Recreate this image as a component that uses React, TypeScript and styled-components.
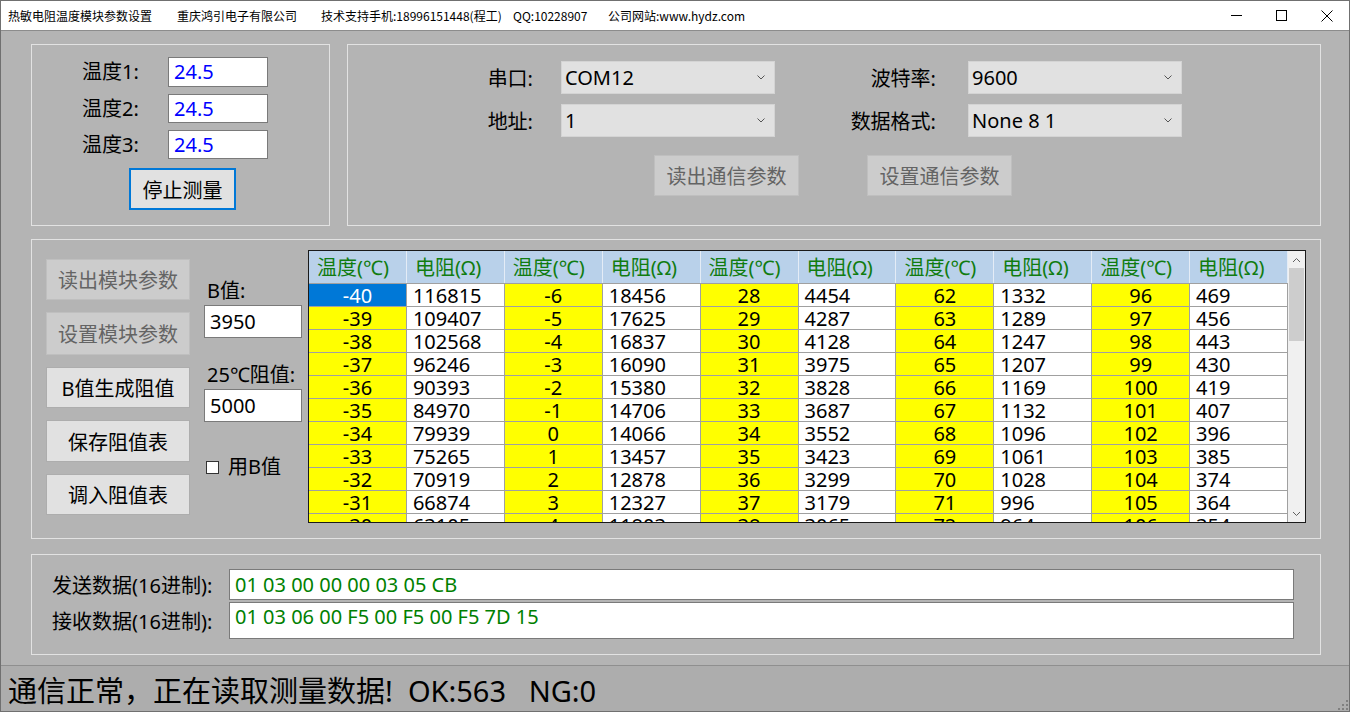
import React from "react";
import styled, { createGlobalStyle } from "styled-components";

const FONT = `"Noto Sans", "Noto Sans CJK SC", sans-serif`;

const GlobalStyle = createGlobalStyle`
  html, body { margin: 0; padding: 0; }
  body { background: #b4b4b4; font-family: ${FONT}; }
  * { box-sizing: border-box; }
`;

const Window = styled.div`
  width: 1350px;
  height: 712px;
  display: flex;
  flex-direction: column;
  background: #b4b4b4;
  border: 1px solid #707070;
  overflow: hidden;
  color: #000;
`;

const TitleBar = styled.div`
  height: 30px;
  flex: none;
  background: #fff;
  border-bottom: 1px solid #8c8c8c;
  display: flex;
  align-items: center;
  padding-left: 7px;
  font-family: "Noto Sans CJK SC", sans-serif;
  font-size: 12px;
`;

const TitleItem = styled.span<{ $w?: number }>`
  width: ${(p) => (p.$w ? `${p.$w}px` : "auto")};
  flex: none;
  white-space: nowrap;
`;

const TitleButtons = styled.div`
  margin-left: auto;
  display: flex;
  height: 100%;
`;

const TitleButton = styled.div`
  width: 45px;
  height: 100%;
  display: flex;
  align-items: center;
  justify-content: center;
`;

const Content = styled.div`
  flex: 1;
  display: flex;
  flex-direction: column;
  padding: 13px 28px 0 30px;
`;

const Group = styled.div<{ $w?: number; $h: number; $mt?: number }>`
  border: 1px solid #e2e2e2;
  width: ${(p) => (p.$w ? `${p.$w}px` : "100%")};
  height: ${(p) => p.$h}px;
  margin-top: ${(p) => p.$mt || 0}px;
  flex: none;
`;

const TopRow = styled.div`
  display: flex;
  gap: 17px;
`;

/* ---------- group 1 ---------- */
const Temps = styled.div`
  display: flex;
  flex-direction: column;
  gap: 7px;
  padding: 12px 0 0 50px;
`;

const FieldRow = styled.div`
  display: flex;
  align-items: center;
`;

const Label = styled.span<{ $w?: number }>`
  font-size: 20px;
  line-height: 28px;
  white-space: nowrap;
  width: ${(p) => (p.$w ? `${p.$w}px` : "auto")};
  flex: none;
`;

const TextBox = styled.div<{ $w: number; $h: number; $color?: string; $lh?: number }>`
  width: ${(p) => p.$w}px;
  height: ${(p) => p.$h}px;
  background: #fff;
  border: 1px solid #7a7a7a;
  color: ${(p) => p.$color || "#000"};
  font-size: 20px;
  line-height: ${(p) => p.$lh ?? p.$h - 2}px;
  padding-left: 5px;
  white-space: nowrap;
  flex: none;
`;

const Button = styled.div<{ $w: number; $h: number; $disabled?: boolean; $focused?: boolean }>`
  width: ${(p) => p.$w}px;
  height: ${(p) => p.$h}px;
  display: flex;
  align-items: center;
  justify-content: center;
  font-size: 20px;
  white-space: nowrap;
  flex: none;
  background: ${(p) => (p.$disabled ? "#cccccc" : "#e1e1e1")};
  color: ${(p) => (p.$disabled ? "#646464" : "#000")};
  border: ${(p) =>
    p.$focused ? "2px solid #0078d7" : p.$disabled ? "1px solid #bfbfbf" : "1px solid #adadad"};
`;

const StopButton = styled(Button)`
  margin: 9px 0 0 97px;
`;

/* ---------- group 2 ---------- */
const CommGrid = styled.div`
  display: grid;
  grid-template-columns: 213px 214px 193px 214px;
  row-gap: 10px;
  padding-top: 16px;
  align-items: center;
`;

const CommLabel = styled.span<{ $pr: number }>`
  font-size: 20px;
  text-align: right;
  padding-right: ${(p) => p.$pr}px;
  white-space: nowrap;
`;

const Combo = styled.div`
  height: 33px;
  background: #e1e1e1;
  border: 1px solid #d4d4d4;
  display: flex;
  align-items: center;
  padding: 0 9px 0 3px;
  font-size: 20px;
  justify-content: space-between;
`;

const CommButtons = styled.div`
  display: flex;
  gap: 68px;
  padding: 18px 0 0 306px;
`;

/* ---------- group 3 ---------- */
const TableGroupInner = styled.div`
  display: flex;
  padding: 10px 14px 0 14px;
  height: 100%;
`;

const ButtonColumn = styled.div`
  display: flex;
  flex-direction: column;
  gap: 12px;
  margin-top: 9px;
  width: 144px;
  flex: none;
`;

const MidColumn = styled.div`
  width: 98px;
  margin: 27px 6px 0 14px;
  display: flex;
  flex-direction: column;
  flex: none;
`;

const MidLabel = styled.div<{ $top: number }>`
  font-size: 20px;
  line-height: 28px;
  padding: ${(p) => p.$top}px 0 0 3px;
  white-space: nowrap;
`;

const CheckRow = styled.div`
  display: flex;
  align-items: center;
  gap: 9px;
  margin-top: 33px;
  padding-left: 2px;
  font-size: 20px;
  line-height: 24px;
`;

const CheckBox = styled.div`
  width: 13px;
  height: 13px;
  background: #fff;
  border: 1px solid #333;
  flex: none;
`;

const Table = styled.div`
  width: 998px;
  height: 273px;
  border: 1px solid #1a1a1a;
  display: flex;
  flex: none;
  background: #fff;
  overflow: hidden;
`;

const TableBody = styled.div`
  width: 979px;
  display: flex;
  flex-direction: column;
  overflow: hidden;
`;

const HeaderRow = styled.div`
  display: grid;
  grid-template-columns: repeat(10, 1fr);
  height: 33px;
  flex: none;
  background: #b9d1ea;
  border-bottom: 1px solid #a0a0a0;
`;

const HeaderCell = styled.div`
  color: #107c10;
  font-size: 20px;
  line-height: 34px;
  padding-left: 8px;
  border-right: 1px solid #e4ecf6;
  white-space: nowrap;
  overflow: hidden;
`;

const DataRow = styled.div`
  display: grid;
  grid-template-columns: repeat(10, 1fr);
  height: 23px;
  flex: none;
  border-bottom: 1px solid #a0a0a0;
`;

const Cell = styled.div<{ $temp?: boolean; $sel?: boolean }>`
  font-size: 20px;
  line-height: 23px;
  white-space: nowrap;
  overflow: hidden;
  border-right: 1px solid #a0a0a0;
  text-align: ${(p) => (p.$temp ? "center" : "left")};
  padding-left: ${(p) => (p.$temp ? 0 : 6)}px;
  background: ${(p) => (p.$sel ? "#0078d7" : p.$temp ? "#ffff00" : "#fff")};
  color: ${(p) => (p.$sel ? "#fff" : "#000")};
`;

const ScrollBar = styled.div`
  width: 17px;
  flex: none;
  background: #f0f0f0;
  display: flex;
  flex-direction: column;
  align-items: center;
`;

const ScrollArrow = styled.div`
  height: 17px;
  width: 17px;
  display: flex;
  align-items: center;
  justify-content: center;
  flex: none;
`;

const ScrollTrack = styled.div`
  flex: 1;
  width: 100%;
  display: flex;
  justify-content: center;
`;

const Thumb = styled.div`
  width: 15px;
  height: 73px;
  background: #cdcdcd;
`;

/* ---------- group 4 ---------- */
const DataGroupInner = styled.div`
  display: flex;
  flex-direction: column;
  gap: 2px;
  padding: 14px 0 0 20px;
`;

const DataLabel = styled.span`
  width: 177px;
  font-size: 20px;
  white-space: nowrap;
  flex: none;
`;

/* ---------- status bar ---------- */
const StatusBar = styled.div`
  margin-top: auto;
  height: 46px;
  flex: none;
  border-top: 1px solid #8f8f8f;
  background: #adadad;
  display: flex;
  align-items: center;
  padding-left: 7px;
  font-size: 29px;
  position: relative;
  white-space: pre;
`;

const Grip = styled.svg`
  position: absolute;
  right: 1px;
  bottom: 1px;
`;

const Chevron = ({ up }: { up?: boolean }) => (
  <svg width="9" height="6" viewBox="0 0 9 6">
    <polyline
      points={up ? "1,5 4.5,1.5 8,5" : "1,1 4.5,4.5 8,1"}
      fill="none"
      stroke="#606060"
      strokeWidth="1"
    />
  </svg>
);

const ComboChevron = () => (
  <svg width="8" height="5" viewBox="0 0 8 5">
    <polyline points="0.5,0.5 4,4 7.5,0.5" fill="none" stroke="#555" strokeWidth="1" />
  </svg>
);

const rows: number[][] = [
  [-40, 116815, -6, 18456, 28, 4454, 62, 1332, 96, 469],
  [-39, 109407, -5, 17625, 29, 4287, 63, 1289, 97, 456],
  [-38, 102568, -4, 16837, 30, 4128, 64, 1247, 98, 443],
  [-37, 96246, -3, 16090, 31, 3975, 65, 1207, 99, 430],
  [-36, 90393, -2, 15380, 32, 3828, 66, 1169, 100, 419],
  [-35, 84970, -1, 14706, 33, 3687, 67, 1132, 101, 407],
  [-34, 79939, 0, 14066, 34, 3552, 68, 1096, 102, 396],
  [-33, 75265, 1, 13457, 35, 3423, 69, 1061, 103, 385],
  [-32, 70919, 2, 12878, 36, 3299, 70, 1028, 104, 374],
  [-31, 66874, 3, 12327, 37, 3179, 71, 996, 105, 364],
  [-30, 63105, 4, 11803, 38, 3065, 72, 964, 106, 354],
];

const fmt = (n: number) => (n < 0 ? `-${-n}` : `${n}`);

const leftButtons: { label: string; h: number; disabled?: boolean }[] = [
  { label: "读出模块参数", h: 41, disabled: true },
  { label: "设置模块参数", h: 43, disabled: true },
  { label: "B值生成阻值", h: 41 },
  { label: "保存阻值表", h: 42 },
  { label: "调入阻值表", h: 41 },
];

export default function App() {
  return (
    <>
      <GlobalStyle />
      <Window>
        <TitleBar>
          <TitleItem $w={169}>热敏电阻温度模块参数设置</TitleItem>
          <TitleItem $w={144}>重庆鸿引电子有限公司</TitleItem>
          <TitleItem $w={192}>技术支持手机:18996151448(程工)</TitleItem>
          <TitleItem $w={95}>QQ:10228907</TitleItem>
          <TitleItem>公司网站:www.hydz.com</TitleItem>
          <TitleButtons>
            <TitleButton>
              <svg width="11" height="11" viewBox="0 0 11 11">
                <line x1="0" y1="5.5" x2="11" y2="5.5" stroke="#000" strokeWidth="1" />
              </svg>
            </TitleButton>
            <TitleButton>
              <svg width="11" height="11" viewBox="0 0 11 11">
                <rect x="0.5" y="0.5" width="10" height="10" fill="none" stroke="#000" strokeWidth="1" />
              </svg>
            </TitleButton>
            <TitleButton>
              <svg width="12" height="12" viewBox="0 0 12 12">
                <path d="M0.5 0.5 L11.5 11.5 M11.5 0.5 L0.5 11.5" stroke="#000" strokeWidth="1" />
              </svg>
            </TitleButton>
          </TitleButtons>
        </TitleBar>

        <Content>
          <TopRow>
            <Group $w={299} $h={182}>
              <Temps>
                {[1, 2, 3].map((i) => (
                  <FieldRow key={i}>
                    <Label $w={86}>温度{i}:</Label>
                    <TextBox $w={100} $h={i === 1 ? 30 : 29} $color="#0000ff">
                      24.5
                    </TextBox>
                  </FieldRow>
                ))}
              </Temps>
              <StopButton $w={107} $h={42} $focused>
                停止测量
              </StopButton>
            </Group>

            <Group $w={974} $h={182}>
              <CommGrid>
                <CommLabel $pr={28}>串口:</CommLabel>
                <Combo>
                  <span>COM12</span>
                  <ComboChevron />
                </Combo>
                <CommLabel $pr={32}>波特率:</CommLabel>
                <Combo>
                  <span>9600</span>
                  <ComboChevron />
                </Combo>
                <CommLabel $pr={28}>地址:</CommLabel>
                <Combo>
                  <span>1</span>
                  <ComboChevron />
                </Combo>
                <CommLabel $pr={32}>数据格式:</CommLabel>
                <Combo>
                  <span>None 8 1</span>
                  <ComboChevron />
                </Combo>
              </CommGrid>
              <CommButtons>
                <Button $w={145} $h={41} $disabled>
                  读出通信参数
                </Button>
                <Button $w={145} $h={41} $disabled>
                  设置通信参数
                </Button>
              </CommButtons>
            </Group>
          </TopRow>

          <Group $h={300} $mt={13}>
            <TableGroupInner>
              <ButtonColumn>
                {leftButtons.map((b) => (
                  <Button key={b.label} $w={144} $h={b.h} $disabled={b.disabled}>
                    {b.label}
                  </Button>
                ))}
              </ButtonColumn>
              <MidColumn>
                <MidLabel $top={0}>B值:</MidLabel>
                <TextBox $w={98} $h={33}>
                  3950
                </TextBox>
                <MidLabel $top={23}>25℃阻值:</MidLabel>
                <TextBox $w={98} $h={33}>
                  5000
                </TextBox>
                <CheckRow>
                  <CheckBox />
                  <span>用B值</span>
                </CheckRow>
              </MidColumn>
              <Table>
                <TableBody>
                  <HeaderRow>
                    {Array.from({ length: 5 }).flatMap((_, i) => [
                      <HeaderCell key={`t${i}`}>温度(℃)</HeaderCell>,
                      <HeaderCell key={`r${i}`}>电阻(Ω)</HeaderCell>,
                    ])}
                  </HeaderRow>
                  {rows.map((r, ri) => (
                    <DataRow key={ri}>
                      {r.map((v, ci) => (
                        <Cell key={ci} $temp={ci % 2 === 0} $sel={ri === 0 && ci === 0}>
                          {fmt(v)}
                        </Cell>
                      ))}
                    </DataRow>
                  ))}
                </TableBody>
                <ScrollBar>
                  <ScrollArrow>
                    <Chevron up />
                  </ScrollArrow>
                  <ScrollTrack>
                    <Thumb />
                  </ScrollTrack>
                  <ScrollArrow>
                    <Chevron />
                  </ScrollArrow>
                </ScrollBar>
              </Table>
            </TableGroupInner>
          </Group>

          <Group $h={101} $mt={15}>
            <DataGroupInner>
              <FieldRow>
                <DataLabel>发送数据(16进制):</DataLabel>
                <TextBox $w={1065} $h={31} $color="#008000">
                  01 03 00 00 00 03 05 CB
                </TextBox>
              </FieldRow>
              <FieldRow>
                <DataLabel>接收数据(16进制):</DataLabel>
                <TextBox $w={1065} $h={37} $lh={28} $color="#008000">
                  01 03 06 00 F5 00 F5 00 F5 7D 15
                </TextBox>
              </FieldRow>
            </DataGroupInner>
          </Group>
        </Content>

        <StatusBar>
          {"通信正常，正在读取测量数据!  OK:563   NG:0"}
          <Grip width="12" height="12" viewBox="0 0 12 12">
            {[
              [10, 2],
              [10, 6],
              [6, 6],
              [10, 10],
              [6, 10],
              [2, 10],
            ].map(([x, y], i) => (
              <rect key={i} x={x} y={y} width="2" height="2" fill="#808080" />
            ))}
          </Grip>
        </StatusBar>
      </Window>
    </>
  );
}
